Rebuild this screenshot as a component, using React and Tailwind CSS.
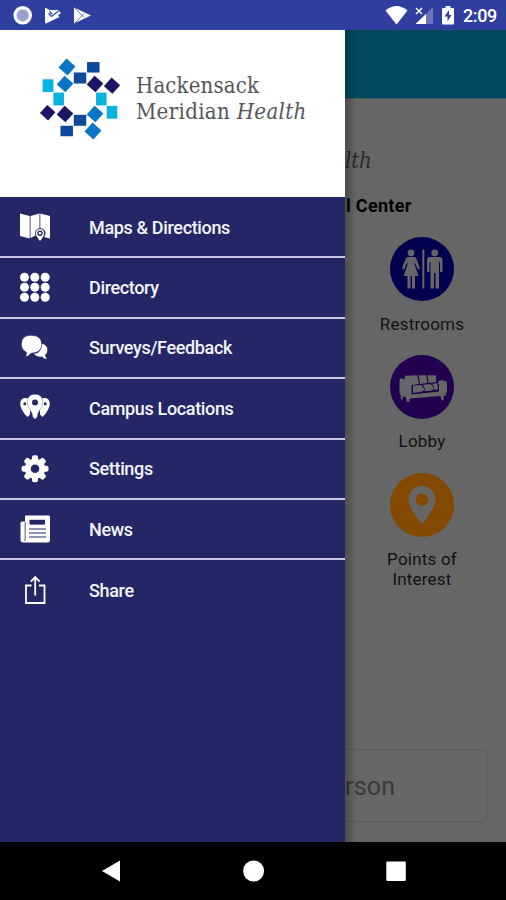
import React from "react";

const MapIcon = () => (
  <svg width="32" height="32" viewBox="0 0 32 32" fill="#fff">
    <path d="M1 2.500 10.700 5V27.500L1 25z" />
    <path d="M11.500 5 20.500 2.500v14.500q-4.500 1.500-4.500 5 0 1 .5 2.500l-5 2.500z" />
    <path d="M21.300 2.500 31 5v22.500l-6-1.500q1.500-2 1.500-3.500 0-4.500-5.200-5.500z" />
    <path
      fillRule="evenodd"
      d="M21 18a4.200 4.200 0 0 1 4.200 4.200q0 2.800-4.200 7.800-4.200-5-4.200-7.800a4.200 4.200 0 0 1 4.200-4.200zm0 1.500a2.700 2.700 0 0 0 0 5.400 2.700 2.700 0 0 0 0-5.400z"
    />
    <circle cx="21" cy="22.200" r="1.300" />
  </svg>
);

const DirectoryIcon = () => (
  <svg width="32" height="32" viewBox="0 0 32 32" fill="#fff">
    {[5.3, 15.3, 25.3].map((y) =>
      [5.5, 15.8, 26.2].map((x) => <circle key={`${x}-${y}`} cx={x} cy={y} r="4.500" />)
    )}
  </svg>
);

const ChatIcon = () => (
  <svg width="32" height="32" viewBox="0 0 32 32" fill="#fff">
    <path d="M22.500 11.500q6 1.500 6 6.500 0 3-2.500 5 .5 2 1.800 4.200-3.300-.5-5-2.700-5 .8-8.300-2.700 8.500 0 8-10.300z" />
    <path
      stroke="#232765"
      strokeWidth=".6"
      d="M12 3.300q10.700 0 10.700 9 0 8.800-10.700 9-2 3-5.800 3.500 1.300-1.700 1.300-4.500-5.200-2.500-5.200-8 0-9 9.700-9z"
    />
  </svg>
);

const CampusIcon = () => (
  <svg width="32" height="32" viewBox="0 0 32 32" fill="#fff">
    <path d="M7 6q2.500 0 4 1.500v15L8.500 25 6 22.500Q1.200 16 1.200 11.800 1.200 6 7 6z" />
    <path d="M25 6q-2.500 0-4 1.500v15l2.500 2.500 2.500-2.500q4.800-6.500 4.800-10.700Q30.800 6 25 6z" />
    <path
      stroke="#232765"
      strokeWidth=".3"
      d="M16 2.300q7.700 0 7.700 7.700 0 4.500-3.700 9.500-1.700 2.500-1.700 5.500L16 27.200 13.700 25q0-3-1.700-5.500-3.700-5-3.700-9.500Q8.300 2.300 16 2.300z"
    />
    <g fill="#232765">
      <circle cx="16" cy="10.500" r="3" />
      <circle cx="5.800" cy="11.800" r="1.500" />
      <circle cx="26.200" cy="11.800" r="1.500" />
    </g>
  </svg>
);

const GearIcon = () => (
  <svg width="32" height="32" viewBox="0 0 32 32">
    <g fill="#fff">
      {[0, 45, 90, 135].map((a) => (
        <rect key={a} x="13" y="2.300" width="6" height="27" rx="2" transform={`rotate(${a} 16 15.800)`} />
      ))}
      <circle cx="16" cy="15.800" r="10.200" />
    </g>
    <circle cx="16" cy="15.800" r="4.300" fill="#232765" />
  </svg>
);

const NewsIcon = () => (
  <svg width="32" height="32" viewBox="0 0 32 32">
    <path d="M7 2.500h23q1 0 1 1V27q0 2.500-2.500 2.500h-24Q1.500 29.500 1.500 27V10q0-1.500 1.500-1.500h3V3.500q0-1 1-1z" fill="#fff" />
    <path d="M6.200 9v16.500q0 2-1 2.500" stroke="#232765" strokeWidth=".8" fill="none" />
    <rect x="10.500" y="6.800" width="15.500" height="4.800" fill="#232765" />
    <path d="M10 16h17M10 20h17M10 24h17" stroke="#232765" strokeWidth="1.200" />
  </svg>
);

const ShareIcon = () => (
  <svg width="32" height="32" viewBox="0 0 32 32" fill="none" stroke="#fff" strokeWidth="1.800">
    <path d="M12.500 10.500H7v17.500h18.500V10.500H20" />
    <path d="M16.200 20.500V2.500M11.800 6.700l4.400-4.600 4.400 4.600" />
  </svg>
);

const menuItems = [
  { label: "Maps & Directions", icon: MapIcon },
  { label: "Directory", icon: DirectoryIcon },
  { label: "Surveys/Feedback", icon: ChatIcon },
  { label: "Campus Locations", icon: CampusIcon },
  { label: "Settings", icon: GearIcon },
  { label: "News", icon: NewsIcon },
  { label: "Share", icon: ShareIcon },
];

// [cx, cy, width, height, color, rotation]
const tiles = [
  [37, 17, 12, 12, "#0876c4", 42],
  [63.3, 17.3, 12.500, 10.500, "#0d4a9c", 0],
  [50, 28, 12.500, 11, "#10489a", 0],
  [35, 34, 11.800, 11.800, "#0876c4", 42],
  [65, 34, 11.800, 11.800, "#1b1464", 42],
  [82, 35.700, 11.500, 11.500, "#1b1464", 42],
  [18, 35.700, 10.800, 12.800, "#05b4e0", 0],
  [28.700, 49, 10.500, 12.800, "#05b4e0", 0],
  [71.300, 49, 10.500, 12.800, "#05b4e0", 0],
  [82, 62.300, 10.500, 12.800, "#05b4e0", 0],
  [17.700, 62.700, 11, 11, "#1b1464", 42],
  [35, 64, 11.800, 11.800, "#1b1464", 42],
  [65, 64, 11.800, 11.800, "#0876c4", 42],
  [50, 70.300, 12.500, 11, "#10489a", 0],
  [36.700, 81, 12.500, 10.500, "#0d4a9c", 0],
  [63, 81, 12, 12, "#0876c4", 42],
];

function LogoMark() {
  return (
    <svg width="100" height="100" viewBox="0 0 100 100" className="shrink-0">
      {tiles.map(([x, y, w, h, color, angle], i) => (
        <rect
          key={i}
          x={x - w / 2}
          y={y - h / 2}
          width={w}
          height={h}
          fill={color}
          transform={`rotate(${angle} ${x} ${y})`}
        />
      ))}
    </svg>
  );
}

function StatusBar() {
  return (
    <div className="flex h-[30px] shrink-0 items-center justify-between bg-[#303f9f] pl-[12px] pr-[9px]">
      <svg width="80" height="30" viewBox="12 0 80 30">
        <circle cx="22.700" cy="15.300" r="7.700" fill="#9aa1d0" stroke="#fff" strokeWidth="3.200" />
        <path d="M45 7.500 49.500 10v3l2 1.500 6-5 3.500 3.500-3 2.500 1.500 1.500L46 23.500q-1 0-1-1z" fill="#fff" />
        <path d="m49 10 4 4 5-4" fill="#fff" />
        <path d="m48.500 13.500 3 3 7-5.500" stroke="#303f9f" strokeWidth="1.200" fill="none" />
        <path d="M74 7.500 91 15.500 74 23.500z" fill="#fff" />
        <path d="m75 8 9 9.500M75 23l9-9.500" stroke="#303f9f" strokeWidth=".7" />
      </svg>
      <div className="flex items-center">
        <svg width="72" height="30" viewBox="385 0 72 30">
          <path d="M385.500 10.500q11-9 22 0L396.500 24.500z" fill="#fff" />
          <path d="M433 7v17h-17z" fill="#6b76ba" />
          <path d="M426 14v10h-10.500z" fill="#fff" />
          <path d="m416 8 6 6m0-6-6 6" stroke="#fff" strokeWidth="1.400" />
          <path d="M445.500 6h5v2h2.500q1 0 1 1v14.500q0 1-1 1h-10q-1 0-1-1V9q0-1 1-1h2.500z" fill="#fff" />
          <path d="m449 10-4.500 6.500h3V21.500l4-6.500h-2.500z" fill="#303f9f" />
        </svg>
        <span className="w-[40px] whitespace-nowrap pl-[6px] pt-[2px] text-[18px] font-medium leading-none tracking-[-0.4px] text-white">2:09</span>
      </div>
    </div>
  );
}

function Drawer() {
  return (
    <aside className="flex w-[345px] shrink-0 flex-col bg-[#232765]">
      <div className="flex h-[167px] items-start bg-white pl-[30px] pt-[20px]">
        <LogoMark />
        <div className="pl-[6px] pt-[23px] font-['DejaVu_Serif_Condensed','DejaVu_Serif','Liberation_Serif',serif] text-[22px] leading-[26px] text-[#55565a]">
          <div className="whitespace-nowrap tracking-[0.15px]">Hackensack</div>
          <div className="whitespace-nowrap tracking-[0.35px]">
            Meridian <em>Health</em>
          </div>
        </div>
      </div>
      <nav className="pt-px">
        {menuItems.map(({ label, icon: Icon }, i) => (
          <div
            key={label}
            className={`flex h-[60.4px] items-center pl-[19px] ${
              i < menuItems.length - 1 ? "border-b-2 border-[#c8c7e2]" : ""
            }`}
          >
            <Icon />
            <span className="pl-[38px] text-[18px] font-medium tracking-[-0.35px] text-[#f4f4fb]">{label}</span>
          </div>
        ))}
      </nav>
    </aside>
  );
}

const RestroomsIcon = () => (
  <svg width="64" height="64" viewBox="0 0 64 64">
    <circle cx="32" cy="32" r="32" fill="#00004f" />
    <g fill="#666">
      <circle cx="21" cy="16" r="3.400" />
      <path d="M18 20h6q2 0 2.500 2L30 31.500l-2 1.300-3.500-8 .2 3L28.500 39H25v12.500h-3V39h-1.500v12.500h-3V39h-4l4-11.200v-3l-3.500 8-2-1.300L15.500 22q.5-2 2.500-2z" />
      <rect x="32.300" y="12.500" width="2" height="39" />
      <circle cx="44.700" cy="16" r="3.400" />
      <path d="M40 20h9.500q3 0 3 3v12h-2.500V25h-1v26.500h-3.500V36h-1.500v15.500h-3.500V25h-1v10H37V23q0-3 3-3z" />
    </g>
  </svg>
);

const LobbyIcon = () => (
  <svg width="64" height="64" viewBox="0 0 64 64">
    <circle cx="32" cy="32" r="32" fill="#23004f" />
    <g fill="#666">
      <path d="M15 20.800 27.300 20.300l1.500 8.700-9.300 1.500-3.500-4.500-1.500-.5z" />
      <path d="M28.600 20.300h7.600l1.300 7.700-7.500 1z" />
      <path d="M37.400 20.200H45q1 0 1 1l.3 5.800-7.500 1z" />
      <path d="M9.500 24.500q.5-1.500 2.500-1 8 2.500 9.500 6.500v8l.8 1.500 26.700-3V30l-1-3q1-2 3.500-1.700l4 .7q1.500.5 1.500 3V37l-1 1v2.500l-2.500.2v4.300h-2l-1-4-30.500 2.500-.8 3.500h-2.400l-1-4.500-3-1.500v3.500h-1.800l-.5-5-1-1z" />
      <path d="M23 30.800 31.500 30l3 4.500-2 2-9.500 1.500z" />
      <path d="m33 29.800 7.500-.8 3.500 4-2 2.500-7.500.8.500-2.300z" />
      <path d="m42 28.800 5.500-.5.500 6-4.500.8.800-2.600z" />
    </g>
  </svg>
);

const PointsIcon = () => (
  <svg width="64" height="64" viewBox="0 0 64 64">
    <circle cx="32" cy="32" r="32" fill="#834900" />
    <path
      fill="#666"
      fillRule="evenodd"
      d="M32 13a13.500 13.500 0 0 1 13.500 13.500Q45.500 35 32 51 18.500 35 18.500 26.500A13.500 13.500 0 0 1 32 13zm0 7.500a6.300 6.300 0 0 0 0 12.600A6.300 6.300 0 0 0 32 20.500z"
    />
  </svg>
);

const places = [
  { label: "Restrooms", icon: RestroomsIcon },
  { label: "Lobby", icon: LobbyIcon },
  { label: "Points of Interest", icon: PointsIcon },
];

function DimmedPage() {
  return (
    <main className="relative flex min-w-0 flex-1 flex-col overflow-hidden bg-[#666]">
      <div className="h-[69px] shrink-0 border-b border-[#4d585c] bg-[#004a61]" />
      <div className="flex h-[138px] shrink-0 flex-col pt-[49px]">
        <div className="font-['DejaVu_Serif_Condensed','DejaVu_Serif','Liberation_Serif',serif] text-[22px] italic leading-[26px] tracking-[-0.2px] text-[#2b2b2b]">
          lth
        </div>
        <div className="whitespace-nowrap pl-px pt-[21px] text-[18px] font-bold leading-[22px] tracking-[0.3px] text-black">
          l Center
        </div>
      </div>
      <div className="flex flex-col items-center pr-[7px]">
        {places.map(({ label, icon: Icon }) => (
          <div key={label} className="flex h-[117.8px] w-[88px] flex-col items-center gap-[12.6px]">
            <div className="h-16 shrink-0">
              <Icon />
            </div>
            <div className="text-center text-[17px] leading-[20px] tracking-[0.2px] text-[#111]">{label}</div>
          </div>
        ))}
      </div>
      <div className="mb-[20px] mr-[19px] mt-auto flex h-[73px] items-center rounded-r-[5px] border border-l-0 border-[#5a5a5a] pt-[2px] text-[25px] tracking-[0.2px] text-[#393939]">
        rson
      </div>
      {/* Drawer shadow */}
      <div className="absolute inset-y-0 left-0 w-[12px] bg-gradient-to-r from-black/25 to-transparent" />
    </main>
  );
}

function NavBar() {
  return (
    <div className="h-[58px] shrink-0 bg-black">
      <svg width="506" height="58" viewBox="0 0 506 58" fill="#fff">
        <path d="M102 29 120 18.500v21z" />
        <circle cx="253.600" cy="29" r="10.500" />
        <rect x="386.300" y="19.500" width="19.500" height="19.500" rx="1" />
      </svg>
    </div>
  );
}

function App() {
  return (
    <div className="flex h-[900px] w-[506px] flex-col overflow-hidden font-[Roboto,sans-serif]">
      <StatusBar />
      <div className="flex min-h-0 flex-1">
        <Drawer />
        <DimmedPage />
      </div>
      <NavBar />
    </div>
  );
}

export default App;
